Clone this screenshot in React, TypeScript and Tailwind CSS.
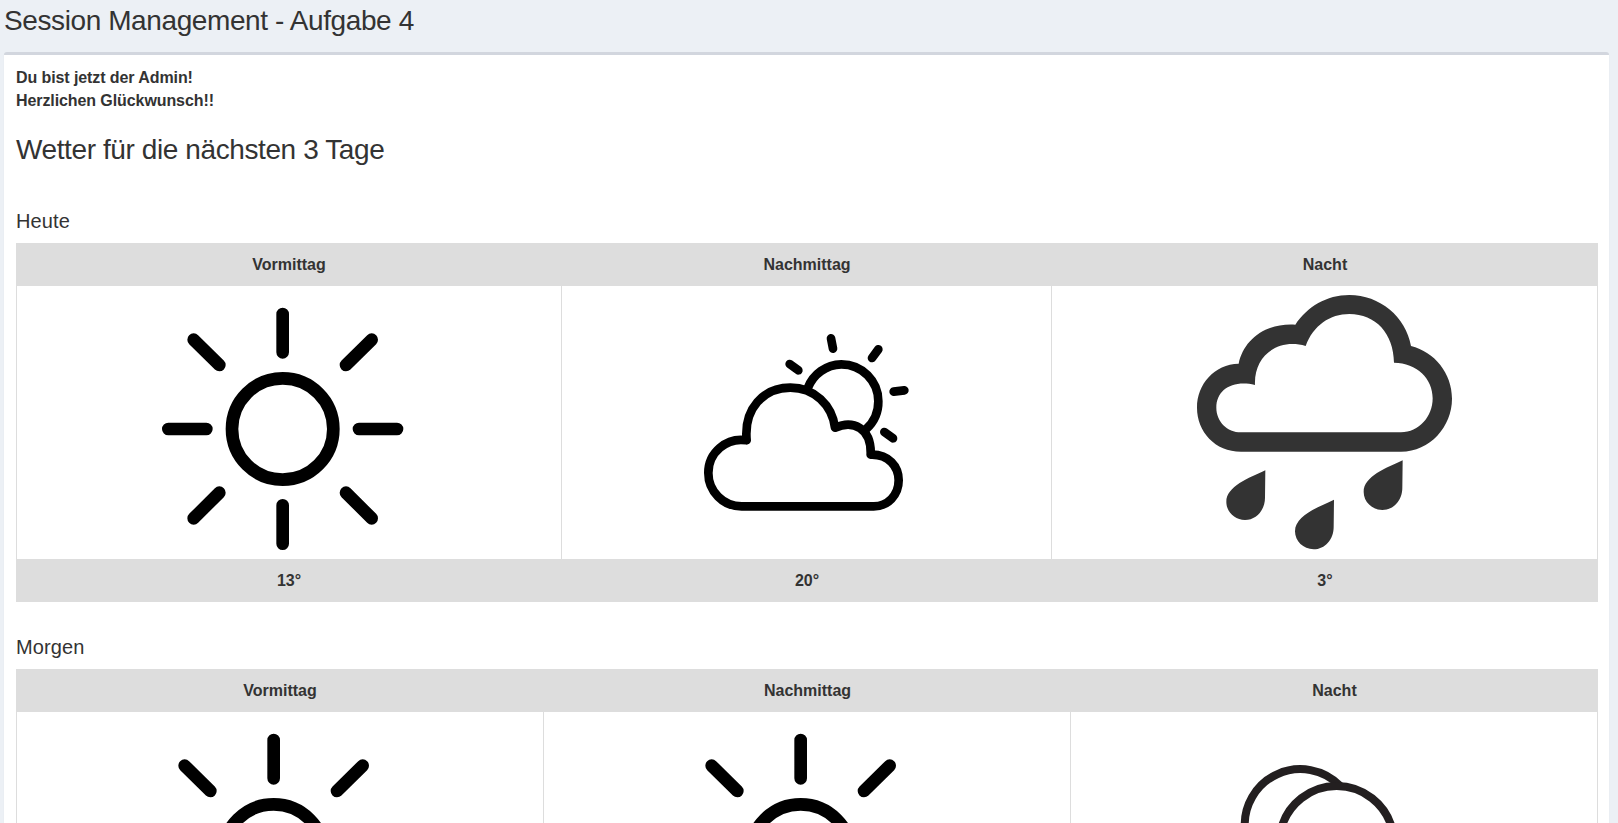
import type { ReactNode } from "react";

function Sun() {
  return (
    <svg className="h-[273px] w-[256px]" viewBox="0 0 768 819" fill="none" stroke="#000" strokeWidth="38" strokeLinecap="round">
      <circle cx="365" cy="429" r="152" />
      <path d="M365 84v115M365 658v115M22 429h114M594 429h114M98 161l77 76M632 161l-77 76M98 697l77-77M632 697l-77-77" />
    </svg>
  );
}

function PartlyCloudy() {
  return (
    <svg className="h-[273px] w-[256px]" viewBox="-32 -102 768 819" fill="none" stroke="#000" strokeWidth="26" strokeLinecap="round" strokeLinejoin="round">
      <path d="M354 205A110 111 0 0 1 455 133A111 111 0 0 1 566 244A111 111 0 0 1 529 328" />
      <path d="M156 559A100 100 0 0 1 56 459A99 99 0 0 1 171 361C162 265 222 203 302 203C374 203 427 255 436 323C490 299 546 323 543 404C597 402 627 440 627 481C627 526 594 559 552 559Z" />
      <path d="M424 55l6 31M566 88l-19 26M612 215l32-4M584 336l26 19M300 132l26 19" />
    </svg>
  );
}

function Rain() {
  return (
    <svg className="h-[273px] w-[256px]" viewBox="51 18 768 819" fill="#333">
      <path fillRule="evenodd" d="M183 515C105 515 51 455 51 383C51 312 103 253 176 251C190 183 253 128 346 134C382 80 440 45 508 45C599 45 678 110 693 198C764 216 816 280 816 356C816 439 750 515 663 515ZM183 457H663C717 457 758 410 758 355C758 296 711 249 642 248C641 160 587 102 508 102C450 102 400 136 377 198C294 174 221 227 225 315C157 299 109 330 109 383C109 424 141 457 183 457Z" />
      <path d="M256 571C207 594 139 619 139 666C139 695 164 720 195 720C229 720 255 690 255 653Z" />
      <path d="M462 659C413 682 345 707 345 754C345 783 370 808 401 808C435 808 461 778 461 741Z" />
      <path d="M668 541C619 564 551 589 551 636C551 665 576 690 607 690C641 690 667 660 667 623Z" />
    </svg>
  );
}

function Clouds() {
  return (
    <svg className="h-[273px] w-[256px]" viewBox="-42 -84 768 819" fill="none" stroke="#231f20" strokeWidth="24">
      <path d="M75 270A167 167 0 0 1 361 138" />
      <path d="M183 269A172 172 0 0 1 517 269" />
      <path d="M75 270C-10 290 -25 390 20 450S100 495 150 495H560C630 495 680 440 660 360C645 300 590 269 517 269" />
    </svg>
  );
}

const grids = {
  even: "grid grid-cols-[528px_527px_527px]",
  wide: "grid grid-cols-[546px_490px_546px]",
};

type DayProps = { title: string; columns: "even" | "wide"; icons: ReactNode[]; temps?: string[] };

function Day({ title, columns, icons, temps }: DayProps) {
  return (
    <section className="mb-[31px]">
      <h3 className="mb-[8px] text-[20px] leading-[28px] tracking-[0.1px]">{title}</h3>
      <div className={`${grids[columns]} h-[43px] items-center bg-[#ddd] text-center font-bold`}>
        <span>Vormittag</span>
        <span>Nachmittag</span>
        <span>Nacht</span>
      </div>
      <div className={`${grids[columns]} h-[273px]`}>
        {icons.map((icon, i) => (
          <div key={i} className="flex justify-center border-r border-[#ddd] first:border-l">{icon}</div>
        ))}
      </div>
      {temps && (
        <div className={`${grids[columns]} h-[43px] items-center bg-[#ddd] text-center font-bold`}>
          {temps.map((t, i) => <span key={i}>{t}</span>)}
        </div>
      )}
    </section>
  );
}

export default function App() {
  return (
    <div className="h-[823px] overflow-hidden bg-[#ecf0f5] font-['Liberation_Sans',Arial,sans-serif] text-[16px] leading-[23px] text-[#333]">
      <h1 className="h-[52px] pt-[5px] pl-[4px] text-[28px] leading-[31px] tracking-[-0.4px]">Session Management - Aufgabe 4</h1>
      <main className="mr-[9px] ml-[4px] rounded-[3px] border-t-3 border-[#d2d6de] bg-white pt-[11px] pr-[11px] pl-[12px] shadow-[0_1px_1px_rgba(0,0,0,0.1)]">
        <p className="font-bold tracking-[-0.09px]">Du bist jetzt der Admin!<br />Herzlichen Glückwunsch!!</p>
        <h2 className="mt-[22px] mb-[42px] text-[28px] leading-[31px] tracking-[-0.4px]">Wetter für die nächsten 3 Tage</h2>
        <Day title="Heute" columns="wide" icons={[<Sun />, <PartlyCloudy />, <Rain />]} temps={["13°", "20°", "3°"]} />
        <Day title="Morgen" columns="even" icons={[<Sun />, <Sun />, <Clouds />]} />
      </main>
    </div>
  );
}
